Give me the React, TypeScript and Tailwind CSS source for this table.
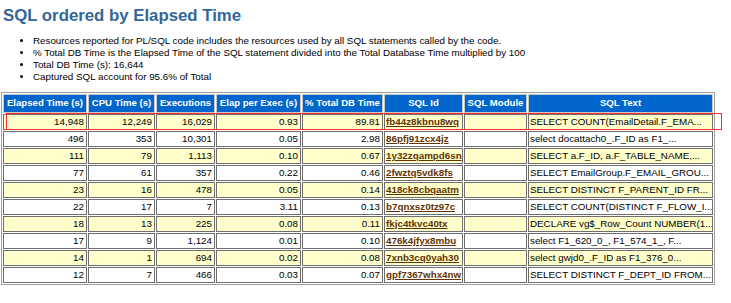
import React from "react";

type SqlRow = {
  elapsed: string;
  cpu: string;
  execs: string;
  perExec: string;
  pctTotal: string;
  sqlId: string;
  sqlText: string;
};

const rows: SqlRow[] = [
  { elapsed: "14,948", cpu: "12,249", execs: "16,029", perExec: "0.93", pctTotal: "89.81", sqlId: "fb44z8kbnu8wq", sqlText: "SELECT COUNT(EmailDetail.F_EMA..." },
  { elapsed: "496", cpu: "353", execs: "10,301", perExec: "0.05", pctTotal: "2.98", sqlId: "86pfj91zcx4jz", sqlText: "select docattach0_.F_ID as F1_..." },
  { elapsed: "111", cpu: "79", execs: "1,113", perExec: "0.10", pctTotal: "0.67", sqlId: "1y32zqampd6sn", sqlText: "SELECT a.F_ID, a.F_TABLE_NAME,..." },
  { elapsed: "77", cpu: "61", execs: "357", perExec: "0.22", pctTotal: "0.46", sqlId: "2fwztq5vdk8fs", sqlText: "SELECT EmailGroup.F_EMAIL_GROU..." },
  { elapsed: "23", cpu: "16", execs: "478", perExec: "0.05", pctTotal: "0.14", sqlId: "418ck8cbqaatm", sqlText: "SELECT DISTINCT F_PARENT_ID FR..." },
  { elapsed: "22", cpu: "17", execs: "7", perExec: "3.11", pctTotal: "0.13", sqlId: "b7qnxsz0tz97c", sqlText: "SELECT COUNT(DISTINCT F_FLOW_I..." },
  { elapsed: "18", cpu: "13", execs: "225", perExec: "0.08", pctTotal: "0.11", sqlId: "fkjc4tkvc40tx", sqlText: "DECLARE vg$_Row_Count NUMBER(1..." },
  { elapsed: "17", cpu: "9", execs: "1,124", perExec: "0.01", pctTotal: "0.10", sqlId: "476k4jfyx8mbu", sqlText: "select F1_620_0_, F1_574_1_, F..." },
  { elapsed: "14", cpu: "1", execs: "694", perExec: "0.02", pctTotal: "0.08", sqlId: "7xnb3cq0yah30", sqlText: "select gwjd0_.F_ID as F1_376_0..." },
  { elapsed: "12", cpu: "7", execs: "466", perExec: "0.03", pctTotal: "0.07", sqlId: "gpf7367whx4nw", sqlText: "SELECT DISTINCT F_DEPT_ID FROM..." },
];

const headers = ["Elapsed Time (s)", "CPU Time (s)", "Executions", "Elap per Exec (s)", "% Total DB Time", "SQL Id", "SQL Module", "SQL Text"];

const App = () => {
  return (
    <div className="relative w-[731px] h-[303px] bg-white overflow-hidden" style={{ fontFamily: '"Liberation Sans", Arial, sans-serif' }}>
      <h3 className="ml-[3px] mt-[5px] text-[16.8px] leading-[22px] font-bold text-[#336699]">SQL ordered by Elapsed Time</h3>
      <ul className="list-disc mt-[8px] pl-[33px] text-[9.8px] leading-[12px] text-black">
        <li>Resources reported for PL/SQL code includes the resources used by all SQL statements called by the code.</li>
        <li>% Total DB Time is the Elapsed Time of the SQL statement divided into the Total Database Time multiplied by 100</li>
        <li>Total DB Time (s): 16,644</li>
        <li>Captured SQL account for 95.6% of Total</li>
      </ul>

      <div className="mt-[9px] pl-[1px]">
        <table className="table-fixed w-[714px] border-separate border-spacing-[1px] border border-[#a0a0a0] text-[9.8px] text-black">
          <colgroup>
            <col className="w-[84px]" />
            <col className="w-[67px]" />
            <col className="w-[59px]" />
            <col className="w-[85px]" />
            <col className="w-[81px]" />
            <col className="w-[79px]" />
            <col className="w-[63px]" />
            <col className="w-[185px]" />
          </colgroup>
          <thead>
            <tr className="h-[19px]">
              {headers.map((h) => (
                <th key={h} className="bg-[#0066cc] text-white font-bold text-[9.6px] text-center p-0 border border-[#c8c8c8] whitespace-nowrap">
                  {h}
                </th>
              ))}
            </tr>
          </thead>
          <tbody>
            {rows.map((r, i) => {
              const bg = i % 2 === 0 ? "bg-[#ffffcc]" : "bg-white";
              const cell = `${bg} border border-[#6e6e6e] p-0 leading-[14px] whitespace-nowrap overflow-hidden`;
              return (
                <tr className="h-[16px]" key={r.sqlId}>
                  <td className={`${cell} text-right pr-[2px]`}>{r.elapsed}</td>
                  <td className={`${cell} text-right pr-[2px]`}>{r.cpu}</td>
                  <td className={`${cell} text-right pr-[2px]`}>{r.execs}</td>
                  <td className={`${cell} text-right pr-[2px]`}>{r.perExec}</td>
                  <td className={`${cell} text-right pr-[2px]`}>{r.pctTotal}</td>
                  <td className={`${cell} text-left pl-[1px]`}>
                    <a className="font-bold text-[#663300] underline">{r.sqlId}</a>
                  </td>
                  <td className={cell}></td>
                  <td className={`${cell} text-left pl-[1px]`}>{r.sqlText}</td>
                </tr>
              );
            })}
          </tbody>
        </table>
      </div>

      {/* red highlight around the top statement */}
      <div className="absolute left-[6px] top-[113px] w-[716px] h-[17px] border border-[#ff2a2a]" />
    </div>
  );
};

export default App;
